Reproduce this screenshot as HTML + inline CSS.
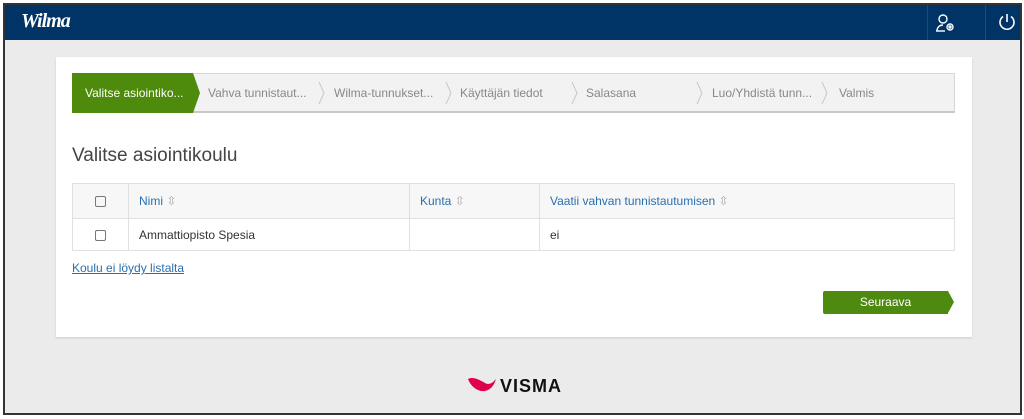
<!DOCTYPE html>
<html><head><meta charset="utf-8"><style>
*{box-sizing:border-box;margin:0;padding:0}
html,body{width:1024px;height:419px;overflow:hidden;background:#fff;font-family:"Liberation Sans",sans-serif}
.frame{position:absolute;left:3px;top:3px;width:1019px;height:412px;border:2px solid #333;background:#ebebeb}
.hdr{position:absolute;left:0;top:0;right:0;height:35px;background:#003466}
.logo{position:absolute;left:16px;top:5px;color:#fff;font:italic bold 20px "Liberation Serif",serif;letter-spacing:-1px}
.sep{position:absolute;top:0;width:1px;height:35px;background:#1e4a78}
.card{position:absolute;left:51px;top:52px;width:916px;height:280px;background:#fff;box-shadow:0 1px 2px #ccc}
.step{position:absolute;left:16px;top:16px;width:883px;height:40px;background:#f2f2f2;border:1px solid #d6d6d6;border-bottom:2px solid #c8c8c8}
.st{position:absolute;top:0;height:38px;line-height:38px;font-size:12px;color:#888}
.act{position:absolute;left:-1px;top:-1px;width:121px;height:40px;background:#4e8a0c;color:#fff;font-size:12px;line-height:40px;padding-left:13px}
.act:after{content:"";position:absolute;right:-7px;top:0;border-left:7px solid #4e8a0c;border-top:20px solid transparent;border-bottom:20px solid transparent}
.title{position:absolute;left:16px;top:88px;font-size:19px;color:#444}
table{position:absolute;left:16px;top:126px;width:883px;border-collapse:collapse;font-size:12px}
td{border:1px solid #e0e0e0;padding:0 10px}
tr.h td{height:35px;background:#f7f7f7;color:#2a6fb0}
tr.r td{height:32px;color:#333}
.cb{display:inline-block;width:11px;height:11px;border:1px solid #777;border-radius:2px;margin-left:22px;vertical-align:middle}
.link{position:absolute;left:16px;top:204px;font-size:12px;color:#2a6fb0;text-decoration:underline}
.btn{position:absolute;left:767px;top:234px;width:125px;height:23px;background:#4f8a10;color:#fff;font-size:12px;line-height:23px;text-align:center;border-radius:2px 0 0 2px}
.btn:after{content:"";position:absolute;right:-6px;top:0;border-left:6px solid #4f8a10;border-top:11.5px solid transparent;border-bottom:11.5px solid transparent}
.visma{position:absolute;top:371px;font:bold 18px "Liberation Sans",sans-serif;color:#111;letter-spacing:1px}
</style></head><body>
<div class="frame">
<div class="hdr"><div class="logo">Wilma</div>
<div class="sep" style="left:922px"></div><div class="sep" style="left:980px"></div>
<svg style="position:absolute;left:930px;top:7px" width="22" height="22" viewBox="0 0 22 22" fill="none" stroke="#fff" stroke-width="1.4"><circle cx="8" cy="7" r="4"/><path d="M2 19c0-4 3-6 6-6"/><path d="M1 19h9"/><circle cx="15" cy="15" r="3"/><circle cx="15" cy="15" r="1"/></svg>
<svg style="position:absolute;left:992px;top:7px" width="20" height="20" viewBox="0 0 20 20" fill="none" stroke="#fff" stroke-width="1.6"><path d="M6 4.5A7 7 0 1 0 14 4.5"/><path d="M10 2v8"/></svg>
</div>
<div class="card">
<div class="step">
<div class="act">Valitse asiointiko...</div>
<div class="st" style="left:135px">Vahva tunnistaut...</div>
<div class="st" style="left:261px">Wilma-tunnukset...</div>
<div class="st" style="left:387px">Käyttäjän tiedot</div>
<div class="st" style="left:513px">Salasana</div>
<div class="st" style="left:639px">Luo/Yhdistä tunn...</div>
<div class="st" style="left:766px">Valmis</div>
<svg style="position:absolute;left:0;top:0" width="883" height="38" fill="none" stroke="#c8c8c8"><path d="M246 8l5 11-5 11M373 8l5 11-5 11M499 8l5 11-5 11M624 8l5 11-5 11M749 8l5 11-5 11"/></svg>
</div>
<div class="title">Valitse asiointikoulu</div>
<table>
<tr class="h"><td style="width:56px;padding:0"><span class="cb"></span></td><td style="width:281px">Nimi <span style="color:#aaa">⇳</span></td><td style="width:130px">Kunta <span style="color:#aaa">⇳</span></td><td>Vaatii vahvan tunnistautumisen <span style="color:#aaa">⇳</span></td></tr>
<tr class="r"><td style="padding:0"><span class="cb"></span></td><td>Ammattiopisto Spesia</td><td></td><td>ei</td></tr>
</table>
<div class="link">Koulu ei löydy listalta</div>
<div class="btn">Seuraava</div>
</div>
<svg style="position:absolute;left:462px;top:371px" width="30" height="18" viewBox="0 0 30 18"><path d="M1 3c3 8 10 13 17 12 5-1 9-5 11-12-4 5-8 6-11 4C13 4 6 0 1 3z" fill="#e0004d"/></svg>
<div class="visma" style="left:495px">VISMA</div>
</div>
</body></html>
